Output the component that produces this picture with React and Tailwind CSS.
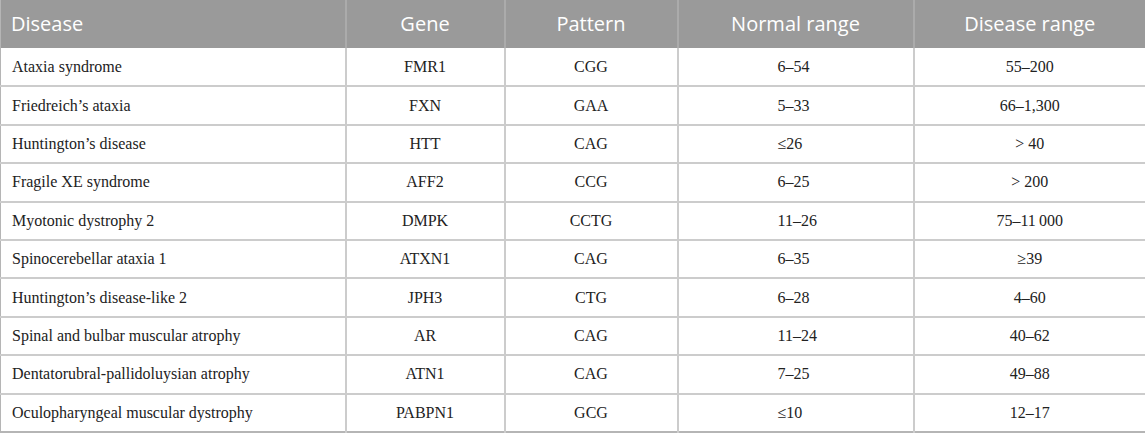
const rows = [
  ["Ataxia syndrome", "FMR1", "CGG", "6–54", "55–200"],
  ["Friedreich’s ataxia", "FXN", "GAA", "5–33", "66–1,300"],
  ["Huntington’s disease", "HTT", "CAG", "≤26", "> 40"],
  ["Fragile XE syndrome", "AFF2", "CCG", "6–25", "> 200"],
  ["Myotonic dystrophy 2", "DMPK", "CCTG", "11–26", "75–11\u2009000"],
  ["Spinocerebellar ataxia 1", "ATXN1", "CAG", "6–35", "≥39"],
  ["Huntington’s disease-like 2", "JPH3", "CTG", "6–28", "4–60"],
  ["Spinal and bulbar muscular atrophy", "AR", "CAG", "11–24", "40–62"],
  ["Dentatorubral-pallidoluysian atrophy", "ATN1", "CAG", "7–25", "49–88"],
  ["Oculopharyngeal muscular dystrophy", "PABPN1", "GCG", "≤10", "12–17"],
];

export default function App() {
  return (
    <div className="w-[1145px] h-[433px] bg-white overflow-hidden">
      <table className="table-fixed border-collapse w-[1145px] border-l border-r border-b-2 border-[#b5b5b5]">
        <colgroup>
          <col className="w-[345px]" />
          <col className="w-[159px]" />
          <col className="w-[173px]" />
          <col className="w-[236px]" />
          <col className="w-[232px]" />
        </colgroup>
        <thead>
          <tr className="h-[48px] bg-[#9a9a9a] text-white text-[20px] font-['Open_Sans',sans-serif]">
            <th className="font-normal text-left pl-[10px] border-r-2 border-[#ababab]">Disease</th>
            <th className="font-normal text-center border-r-2 border-[#ababab]">Gene</th>
            <th className="font-normal text-center border-r-2 border-[#ababab]">Pattern</th>
            <th className="font-normal text-center border-r-2 border-[#ababab]">Normal range</th>
            <th className="font-normal text-center">Disease range</th>
          </tr>
        </thead>
        <tbody className="font-['Liberation_Serif',serif] text-[16px] text-[#222222]">
          {rows.map((r) => (
            <tr key={r[0]} className="h-[38.4px] border-b-2 border-[#cccccc] last:border-b-0">
              <td className="pl-[11px] border-r-2 border-[#cccccc]">{r[0]}</td>
              <td className="text-center border-r-2 border-[#cccccc]">{r[1]}</td>
              <td className="text-center border-r-2 border-[#cccccc]">{r[2]}</td>
              <td className="pl-[99px] border-r-2 border-[#cccccc]">{r[3]}</td>
              <td className="text-center">{r[4]}</td>
            </tr>
          ))}
        </tbody>
      </table>
    </div>
  );
}
